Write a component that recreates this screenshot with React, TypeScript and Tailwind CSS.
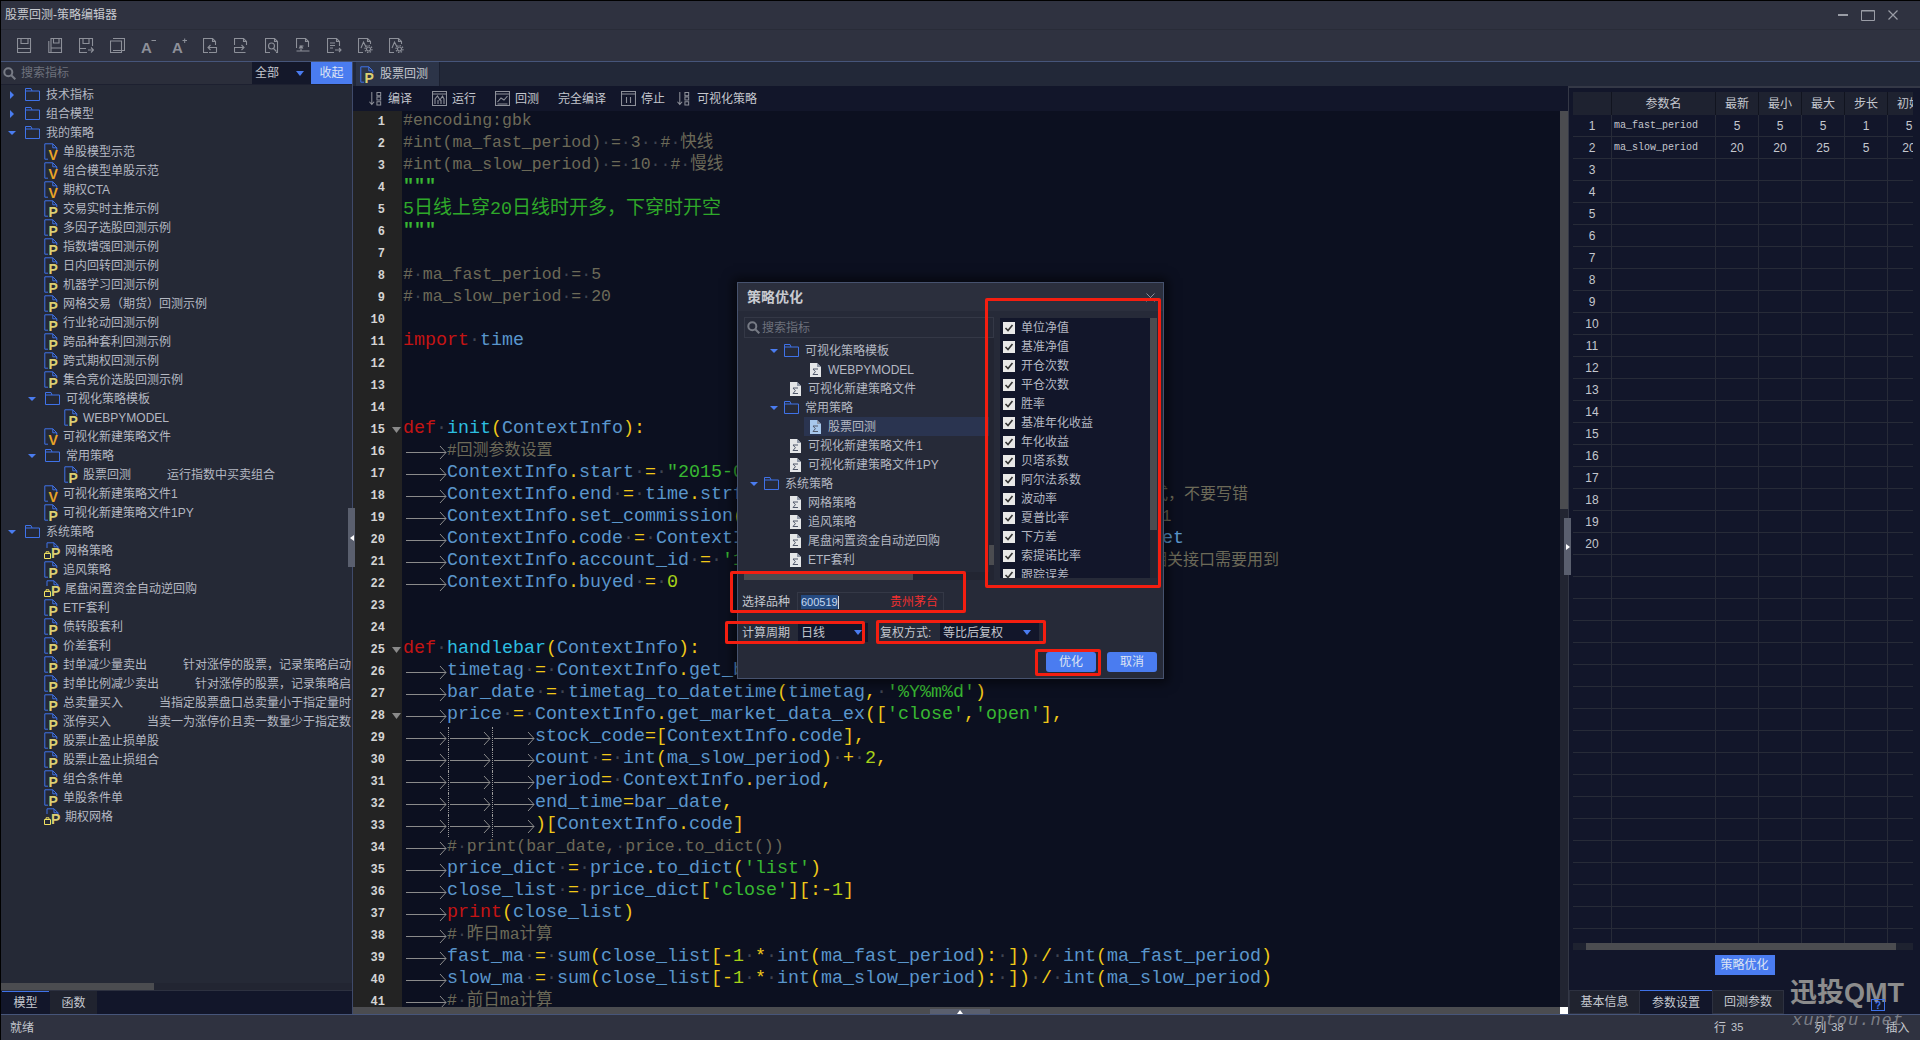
import React from "react";

const BLUE = "#3f72e8";

function Arrow({ open }: { open: boolean }) {
  return (
    <svg width="8" height="8" viewBox="0 0 8 8" className="shrink-0">
      {open ? <path d="M0 2h8L4 6z" fill="#4a7cf0" /> : <path d="M2 0l4 4-4 4z" fill="#4a7cf0" />}
    </svg>
  );
}

function Folder() {
  return (
    <svg width="15" height="13" viewBox="0 0 15 13" fill="none" stroke={BLUE} className="shrink-0">
      <path d="M.5.5h5.5l1 2.5h7.5v9.5H.5zM.5 3H7" />
    </svg>
  );
}

function FileIcon({ k }: { k: string }) {
  if (k === "L") {
    return (
      <svg width="16" height="17" viewBox="0 0 16 17" fill="none" className="shrink-0 overflow-visible">
        <path d="M3 6V.8h7l4 4V7M10 .8v4h4" stroke={BLUE} />
        <text x="7" y="15.5" fontSize="14" fontWeight="700" fill="#dccf72" fontFamily="Liberation Sans">P</text>
        <path d="M.5 11.5h6v5h-6zM2 11.5V9.8h3v1.7" stroke="#f0e060" />
      </svg>
    );
  }
  const v = k === "V";
  return (
    <svg width="14" height="17" viewBox="0 0 14 17" fill="none" className="shrink-0 overflow-visible">
      <path d="M4 16.2H.8V.8h8l4 4V7M8.8.8v4h4" stroke={BLUE} />
      <text x="4.5" y="16.5" fontSize="14" fontWeight="700" fill={v ? "#e8a428" : "#dccf72"} fontFamily="Liberation Sans">{v ? "V" : "P"}</text>
    </svg>
  );
}

function SumIcon({ active }: { active?: boolean }) {
  return (
    <svg width="11" height="14" viewBox="0 0 11 14" className="shrink-0">
      <path d="M0 0h7l4 4v10H0z" fill={active ? "#a8c8ec" : "#e4e6e8"} />
      <path d="M7 0v4h4" fill="#8f98a8" />
      <path d="M3 6h5M3 6l2.400 2.700L3 11.500h5" fill="none" stroke="#50586a" />
    </svg>
  );
}

type T = [string, string, string?];
const tree: T[] = [
  ["F0c", "技术指标"], ["F0c", "组合模型"], ["F0", "我的策略"],
  ["V", "单股模型示范"], ["V", "组合模型单股示范"], ["V", "期权CTA"],
  ["P", "交易实时主推示例"], ["P", "多因子选股回测示例"], ["P", "指数增强回测示例"], ["P", "日内回转回测示例"], ["P", "机器学习回测示例"],
  ["P", "网格交易（期货）回测示例"], ["P", "行业轮动回测示例"], ["P", "跨品种套利回测示例"], ["P", "跨式期权回测示例"], ["P", "集合竞价选股回测示例"],
  ["F1", "可视化策略模板"], ["P2", "WEBPYMODEL"], ["V", "可视化新建策略文件"], ["F1", "常用策略"],
  ["P2", "股票回测", "运行指数中买卖组合"], ["V", "可视化新建策略文件1"], ["P", "可视化新建策略文件1PY"],
  ["F0", "系统策略"], ["L", "网格策略"], ["P", "追风策略"], ["L", "尾盘闲置资金自动逆回购"], ["P", "ETF套利"], ["P", "债转股套利"], ["P", "价差套利"],
  ["P", "封单减少量卖出", "针对涨停的股票，记录策略启动"], ["P", "封单比例减少卖出", "针对涨停的股票，记录策略启"],
  ["P", "总卖量买入", "当指定股票盘口总卖量小于指定量时"], ["P", "涨停买入", "当卖一为涨停价且卖一数量少于指定数"],
  ["P", "股票止盈止损单股"], ["P", "股票止盈止损组合"], ["P", "组合条件单"], ["P", "单股条件单"], ["L", "期权网格"],
];

function TreeRow({ t }: { t: T }) {
  const [k, label, desc] = t;
  let head: React.ReactNode;
  if (k === "F0" || k === "F0c") {
    head = <div className="flex items-center pl-[8px]"><Arrow open={k === "F0"} /><div className="w-[9px]" /><Folder /><div className="w-[6px]" /></div>;
  } else if (k === "F1") {
    head = <div className="flex items-center pl-[28px]"><Arrow open /><div className="w-[9px]" /><Folder /><div className="w-[6px]" /></div>;
  } else if (k === "P2") {
    head = <div className="flex items-center pl-[64px] pr-[5px]"><FileIcon k="P" /></div>;
  } else {
    head = <div className="flex items-center pl-[44px] pr-[5px]"><FileIcon k={k} /></div>;
  }
  return (
    <div className="flex items-center h-[19px] whitespace-nowrap overflow-hidden text-[12px] text-[#b4b8c2]">
      {head}
      <span>{label}</span>
      {desc && <span className="ml-9">{desc}</span>}
    </div>
  );
}

type D = [string, string];
const dlgTree: D[] = [
  ["F1", "可视化策略模板"], ["S2", "WEBPYMODEL"], ["S1", "可视化新建策略文件"], ["F1", "常用策略"], ["SEL", "股票回测"],
  ["S1", "可视化新建策略文件1"], ["S1", "可视化新建策略文件1PY"], ["F0", "系统策略"], ["S1", "网格策略"], ["S1", "追风策略"],
  ["S1", "尾盘闲置资金自动逆回购"], ["S1", "ETF套利"],
];

function DlgRow({ d }: { d: D }) {
  const [k, label] = d;
  if (k === "F1" || k === "F0") {
    return (
      <div className={k === "F1" ? "flex items-center h-[19px] pl-[26px] text-[12px] text-[#b4b8c2] whitespace-nowrap" : "flex items-center h-[19px] pl-[6px] text-[12px] text-[#b4b8c2] whitespace-nowrap"}>
        <Arrow open /><div className="w-[6px]" /><Folder /><div className="w-[6px]" />
        <span>{label}</span>
      </div>
    );
  }
  if (k === "S1") {
    return <div className="flex items-center h-[19px] pl-[46px] gap-[7px] text-[12px] text-[#b4b8c2] whitespace-nowrap"><SumIcon /><span>{label}</span></div>;
  }
  if (k === "S2") {
    return <div className="flex items-center h-[19px] pl-[66px] gap-[7px] text-[12px] text-[#b4b8c2] whitespace-nowrap"><SumIcon /><span>{label}</span></div>;
  }
  return (
    <div className="flex h-[19px] pl-[60px]">
      <div className="flex flex-1 items-center pl-[6px] gap-[7px] text-[12px] text-[#b4b8c2] whitespace-nowrap bg-[#2a3450]"><SumIcon active /><span>{label}</span></div>
    </div>
  );
}

/* ----- code ----- */
function Dot() {
  return <span className="text-[#3e4350]">·</span>;
}

function tokens(s: string) {
  const re = /("[^"]*"|'[^']*'|\b(?:def|import|print)\b|\b(?:init|handlebar)\b|\b\d+\b|[A-Za-z_][A-Za-z_0-9]*| |[^\sA-Za-z_0-9"'])/g;
  const out: React.ReactNode[] = [];
  let m: RegExpExecArray | null;
  let i = 0;
  while ((m = re.exec(s))) {
    const t = m[0];
    const key = i++;
    if (t === " ") out.push(<Dot key={key} />);
    else if (/^["']/.test(t)) out.push(<span key={key} className="text-[#38b832]">{t}</span>);
    else if (/^(def|import|print)$/.test(t)) out.push(<span key={key} className="text-[#c41414]">{t}</span>);
    else if (/^(init|handlebar)$/.test(t)) out.push(<span key={key} className="text-[#2cbfe0]">{t}</span>);
    else if (/^\d/.test(t)) out.push(<span key={key} className="text-[#a6d018]">{t}</span>);
    else if (/^[A-Za-z_]/.test(t)) out.push(<span key={key} className="text-[#5a96cc]">{t}</span>);
    else out.push(<span key={key} className="text-[#f0c818]">{t}</span>);
  }
  return out;
}

function Cm({ s }: { s: string }) {
  const parts = s.split(/( )/);
  return (
    <span className="text-[16.5px] text-[#6c6a58]">
      {parts.map((p, i) => (p === " " ? <Dot key={i} /> : <span key={i}>{p}</span>))}
    </span>
  );
}

function Tab({ guide }: { guide?: boolean }) {
  return (
    <span className="relative inline-block w-[44px] h-[20px] align-top shrink-0">
      <svg width="44" height="22" viewBox="0 0 44 22" fill="none" stroke="#8b8b8b" className="block">
        <path d="M3 11.500h40M37 5l6 6.500-6 6.500" />
      </svg>
      {guide && <span className="absolute left-[1px] top-0 h-[22px] border-l border-dotted border-[#9a9a9a]" />}
    </span>
  );
}

function Tabs({ n, guide }: { n: number; guide?: boolean }) {
  return (
    <>
      <Tab />
      {n > 1 && <Tab guide={guide} />}
      {n > 2 && <Tab guide={guide} />}
    </>
  );
}

const C = ({ s }: { s: string }) => <>{tokens(s)}</>;
const Sp = ({ cls }: { cls: string }) => <span className={cls} />;

const lines: { n: number; fold?: boolean; c: React.ReactNode }[] = [
  { n: 1, c: <Cm s="#encoding:gbk" /> },
  { n: 2, c: <Cm s="#int(ma_fast_period) = 3  # 快线" /> },
  { n: 3, c: <Cm s="#int(ma_slow_period) = 10  # 慢线" /> },
  { n: 4, c: <span className="text-[#38b832] font-bold">"""</span> },
  { n: 5, c: <span className="text-[#2fa82a]">5<span className="text-[19px]">日线上穿</span>20<span className="text-[19px]">日线时开多，下穿时开空</span></span> },
  { n: 6, c: <span className="text-[#38b832] font-bold">"""</span> },
  { n: 7, c: null },
  { n: 8, c: <Cm s="# ma_fast_period = 5" /> },
  { n: 9, c: <Cm s="# ma_slow_period = 20" /> },
  { n: 10, c: null },
  { n: 11, c: <C s="import time" /> },
  { n: 12, c: null },
  { n: 13, c: null },
  { n: 14, c: null },
  { n: 15, fold: true, c: <C s="def init(ContextInfo):" /> },
  { n: 16, c: <><Tabs n={1} /><span className="text-[16px] text-[#6c6a58]">#回测参数设置</span></> },
  { n: 17, c: <><Tabs n={1} /><C s={'ContextInfo.start = "2015-01-05"'} /></> },
  { n: 18, c: <><Tabs n={1} /><C s="ContextInfo.end = time.strftime(" /><Sp cls="inline-block w-[353px]" /><span className="text-[16px] text-[#6c6a58]">式，不要写错</span></> },
  { n: 19, c: <><Tabs n={1} /><C s="ContextInfo.set_commission(" /><Sp cls="inline-block w-[368px]" /><Cm s="0.0001" /></> },
  { n: 20, c: <><Tabs n={1} /><C s="ContextInfo.code = ContextInfo.stockcode + '.' + ContextInfo.market" /></> },
  { n: 21, c: <><Tabs n={1} /><C s="ContextInfo.account_id = '100000'" /><Sp cls="inline-block w-[341px]" /><span className="text-[16px] text-[#6c6a58]">相关接口需要用到</span></> },
  { n: 22, c: <><Tabs n={1} /><C s="ContextInfo.buyed = 0" /></> },
  { n: 23, c: null },
  { n: 24, c: null },
  { n: 25, fold: true, c: <C s="def handlebar(ContextInfo):" /> },
  { n: 26, c: <><Tabs n={1} /><C s="timetag = ContextInfo.get_bar_timetag(ContextInfo.barpos)" /></> },
  { n: 27, c: <><Tabs n={1} /><C s="bar_date = timetag_to_datetime(timetag, '%Y%m%d')" /></> },
  { n: 28, fold: true, c: <><Tabs n={1} /><C s="price = ContextInfo.get_market_data_ex(['close','open']," /></> },
  { n: 29, c: <><Tabs n={3} guide /><C s="stock_code=[ContextInfo.code]," /></> },
  { n: 30, c: <><Tabs n={3} guide /><C s="count = int(ma_slow_period) + 2," /></> },
  { n: 31, c: <><Tabs n={3} guide /><C s="period= ContextInfo.period," /></> },
  { n: 32, c: <><Tabs n={3} guide /><C s="end_time=bar_date," /></> },
  { n: 33, c: <><Tabs n={3} guide /><C s=")[ContextInfo.code]" /></> },
  { n: 34, c: <><Tabs n={1} /><Cm s="# print(bar_date, price.to_dict())" /></> },
  { n: 35, c: <><Tabs n={1} /><C s="price_dict = price.to_dict('list')" /></> },
  { n: 36, c: <><Tabs n={1} /><C s="close_list = price_dict['close'][:-1]" /></> },
  { n: 37, c: <><Tabs n={1} /><C s="print(close_list)" /></> },
  { n: 38, c: <><Tabs n={1} /><Cm s="# 昨日ma计算" /></> },
  { n: 39, c: <><Tabs n={1} /><C s="fast_ma = sum(close_list[-1 * int(ma_fast_period): ]) / int(ma_fast_period)" /></> },
  { n: 40, c: <><Tabs n={1} /><C s="slow_ma = sum(close_list[-1 * int(ma_slow_period): ]) / int(ma_slow_period)" /></> },
  { n: 41, c: <><Tabs n={1} /><Cm s="# 前日ma计算" /></> },
];

/* ----- toolbar icons ----- */
const I = ({ children, w = 15 }: { children: React.ReactNode; w?: number }) => (
  <svg width={w} height="15" viewBox="0 0 15 15" fill="none" stroke="#8d9099" strokeWidth="1.1" className="shrink-0">{children}</svg>
);

const toolbar: React.ReactNode[] = [
  <I key="1"><path d="M.5.5h13v14H.5zM4 .5v5h7v-5M.5 10.500h13" /></I>,
  <I key="2"><path d="M3 .5h10.500v14H3zM.8 3v11.500h9M5.500.5v4.500h5.500V.5M3 10h10" /></I>,
  <I key="3"><path d="M8 14.500H.5V.5h13V8M4 .5v5h6v-5M.5 10.500H7M9 12h5.500M12 9.500l2.500 2.500-2.500 2.500" /></I>,
  <I key="4"><path d="M3 .5h11.500v12H3M.5 3v11.500h11V3zM.5 3H3" /></I>,
  <svg key="5" width="15" height="15" viewBox="0 0 15 15" className="shrink-0 overflow-visible"><text x="0" y="15" fontSize="15" fontWeight="700" fill="#8d9099" fontFamily="Liberation Sans">A</text><path d="M10.500 2.500h4.500" stroke="#8d9099" /></svg>,
  <svg key="6" width="15" height="15" viewBox="0 0 15 15" className="shrink-0 overflow-visible"><text x="0" y="15" fontSize="15" fontWeight="700" fill="#8d9099" fontFamily="Liberation Sans">A</text><path d="M10.500 2.500h4.500M12.700.5v4.500" stroke="#8d9099" /></svg>,
  <I key="7"><path d="M5 14.500H.5V.5h9l3 3V7M9.500.5v3h3M13.500 14.500V9.500h-8M7.500 7l-2.500 2.500 2.500 2.500M13.500 14.500H6" /></I>,
  <I key="8"><path d="M.5 7V.5h9l3 3V7M9.500.5v3h3M.5 14.500V9.500h9M7.500 7l2.500 2.500-2.500 2.500M.5 14.500h11" /></I>,
  <I key="9"><path d="M5 14.500H.5V.5h9l3 3v11H11M9.500.5v3h3" /><circle cx="6.500" cy="8" r="3" /><path d="M8.500 10.500l3 3" /></I>,
  <I key="10"><path d="M.5 10V.5h9l3 3V9M9.500.5v3h3M.5 13h13M5 13V8M7.500 8H3.500M3 10.500l2-2.500 2 2.500" /></I>,
  <I key="11"><path d="M7 14.500H.5V.5h9l3 3V8M9.500.5v3h3M3 5h5M3 7.500h5M3 10h3M8 12h6M12 10l2 2-2 2" /></I>,
  <I key="12"><path d="M5 14.500H.5V.5h9l3 3V6M9.500.5v3h3M3 10l2.500-6L8 9" /><circle cx="10.500" cy="11" r="2" /><circle cx="10.500" cy="11" r="3.500" strokeDasharray="1.500 1.200" /></I>,
  <I key="13"><path d="M5 14.500H.5V.5h9l3 3V6M9.500.5v3h3M3 10l2.500-6L8 9" /><circle cx="10.500" cy="11" r="2" /><circle cx="10.500" cy="11" r="3.500" strokeDasharray="1.500 1.200" /></I>,
];

const SortIcon = () => (
  <I w={14}><path d="M3 .5v13M.5 11l2.500 3 2.500-3M8.500 1h4v3.500h-4zM8.500 6h4v3h-4zM8.500 11h4v3.500h-4z" /></I>
);
const ChartBox = ({ d }: { d: string }) => (
  <I><path d="M.5.5h14v14H.5zM.5 3h14" /><path d={d} /></I>
);

const cols = ["w-[39px]", "w-[104px]", "w-[43px]", "w-[43px]", "w-[43px]", "w-[43px]", "w-[43px]"];
const rowsData: Record<number, string[]> = {
  1: ["ma_fast_period", "5", "5", "5", "1", "5"],
  2: ["ma_slow_period", "20", "20", "25", "5", "20"],
};
const checks = ["单位净值", "基准净值", "开仓次数", "平仓次数", "胜率", "基准年化收益", "年化收益", "贝塔系数", "阿尔法系数", "波动率", "夏普比率", "下方差", "索提诺比率", "跟踪误差"];

const Caret = () => (
  <svg width="8" height="5" viewBox="0 0 8 5" className="shrink-0"><path d="M0 0h8L4 5z" fill="#4a7cf0" /></svg>
);
const SearchIcon = () => (
  <svg width="13" height="13" viewBox="0 0 13 13" fill="none" stroke="#777b85" strokeWidth="2" className="shrink-0">
    <circle cx="5.300" cy="5.300" r="4" /><path d="M8.300 8.300l4 4" />
  </svg>
);

export default function App() {
  return (
    <div className="relative w-[1920px] h-[1040px] overflow-hidden flex flex-col bg-[#2f3240] text-[12px] text-[#c4c7ce] font-['Liberation_Sans','Noto_Sans_CJK_SC',sans-serif]">
      {/* title */}
      <div className="h-[30px] shrink-0 flex items-center justify-between border-t border-b border-t-black border-b-[#292c38] pl-[5px] pr-[22px] bg-[#2f3240]">
        <span className="text-[12px] text-[#c8cad0]">股票回测-策略编辑器</span>
        <div className="flex items-center gap-[13px]">
          <svg width="10" height="10" viewBox="0 0 10 10"><path d="M0 5h10" stroke="#9a9da6" strokeWidth="2" /></svg>
          <svg width="14" height="11" viewBox="0 0 14 11" fill="none" stroke="#9a9da6"><path d="M.5.5h13v10H.5z" /><path d="M.5 1h13" /></svg>
          <svg width="10" height="10" viewBox="0 0 10 10" fill="none" stroke="#9a9da6" strokeWidth="1.200"><path d="M.5.5l9 9M9.500.5l-9 9" /></svg>
        </div>
      </div>
      {/* toolbar */}
      <div className="h-[32px] shrink-0 flex items-center pl-[17px] gap-[16px] bg-[#2f3240] border-b border-[#46557a]">
        {toolbar}
      </div>
      {/* main */}
      <div className="flex-1 flex min-h-0">
        {/* left */}
        <div className="w-[352px] shrink-0 flex flex-col bg-[#252936]">
          <div className="h-[23px] shrink-0 flex bg-[#2b2e3b] border-b border-[#1d2030]">
            <div className="w-[250px] flex items-center pl-[3px] gap-[5px] text-[#6d717c]">
              <SearchIcon /><span>搜索指标</span>
            </div>
            <div className="w-[59px] ml-[2px] flex items-center justify-between pl-[3px] pr-[7px] bg-[#14182a] text-[#c4c7ce]">
              <span>全部</span><Caret />
            </div>
            <div className="w-[41px] flex items-center justify-center bg-[#4a7cf0] text-[#dde4f4]">收起</div>
          </div>
          <div className="flex-1 min-h-0 overflow-hidden pr-[1px]">
            {tree.map((t, i) => <TreeRow key={i} t={t} />)}
          </div>
          <div className="h-[7px] shrink-0 bg-[#222532]"><div className="w-[154px] h-full bg-[#4b4c50]" /></div>
          <div className="h-[24px] shrink-0 flex bg-[#12162a] border-t border-[#2d3140] pl-[2px] gap-[1px] text-[#c4c7ce]">
            <div className="w-[47px] flex items-center justify-center bg-[#12162a] border-t border-[#3f72e8]">模型</div>
            <div className="w-[47px] flex items-center justify-center bg-[#20232f]">函数</div>
          </div>
        </div>
        {/* right of left */}
        <div className="flex-1 min-w-0 flex flex-col">
          <div className="h-[24px] shrink-0 flex bg-[#222838] pl-[3px] border-l border-[#3f4a6a]">
            <div className="w-[84px] flex items-center pl-[4px] gap-[6px] bg-[#2c3448] border-r border-[#1b2030] text-[#c4c7ce]">
              <FileIcon k="P" /><span>股票回测</span>
            </div>
          </div>
          <div className="flex-1 min-h-0 flex">
            {/* editor */}
            <div className="w-[1216px] shrink-0 flex flex-col border-l border-[#3f4a6a] bg-[#0c1020]">
              <div className="h-[25px] shrink-0 flex items-center pl-[16px] bg-[#12162a] text-[#c4c7ce]">
                <SortIcon /><span className="ml-[5px]">编译</span>
                <span className="ml-[20px]"><ChartBox d="M3 13V8l2.500-3L8 9l2.500-4L12 8v5M6 13V9M9 13V9" /></span><span className="ml-[5px]">运行</span>
                <span className="ml-[19px]"><ChartBox d="M2.500 11l3.500-4 3 2 3.500-4M2.500 13h10" /></span><span className="ml-[5px]">回测</span>
                <span className="ml-[19px]">完全编译</span>
                <span className="ml-[15px]"><ChartBox d="M5.500 6v6M9.500 6v6" /></span><span className="ml-[5px]">停止</span>
                <span className="ml-[12px]"><SortIcon /></span><span className="ml-[6px]">可视化策略</span>
              </div>
              <div className="flex-1 min-h-0 flex">
                <div className="w-[1207px] shrink-0 overflow-hidden font-['Liberation_Mono','Noto_Sans_CJK_SC',monospace] text-[18.33px]">
                  {lines.map((l) => (
                    <div key={l.n} className="flex h-[22px] leading-[22px] whitespace-pre">
                      <div className="relative w-[49px] shrink-0 bg-[#232323] pr-[17px] text-right text-[12px] font-bold text-[#d4d4d4]">
                        {l.n}
                        {l.fold && <svg width="9" height="6" viewBox="0 0 9 6" className="absolute left-[39px] top-[8px]"><path d="M0 0h9L4.500 6z" fill="#8a8a8a" /></svg>}
                      </div>
                      <div className="pl-[1px] flex items-start leading-[20px]">
                        <span>{l.c}</span>
                      </div>
                    </div>
                  ))}
                </div>
                <div className="w-[8px] shrink-0 bg-[#222532]"><div className="h-[398px] bg-[#4b4c50]" /></div>
              </div>
              <div className="h-[7px] shrink-0 flex bg-[#4b4c50]">
                <div className="flex-1" />
                <div className="w-[8px] bg-white" />
              </div>
            </div>
            {/* right panel */}
            <div className="flex-1 min-w-0 flex flex-col bg-[#12162a] border-t-[2px] border-l border-[#343846]">
              <div className="mt-[4px] ml-[4px] w-[340px] h-[851px] shrink-0 overflow-hidden">
                <div className="flex w-[400px] h-[23px] bg-[#1e2230]">
                  {["", "参数名", "最新", "最小", "最大", "步长", "初始"].map((h, i) => (
                    <div key={i} className={cols[i] + " shrink-0 flex items-center justify-center border-r border-[#11141f] text-[#c4c7ce]"}>{h}</div>
                  ))}
                </div>
                {Array.from({ length: 38 }, (_, i) => i + 1).map((r) => {
                  const d = rowsData[r] || ["", "", "", "", "", ""];
                  return (
                    <div key={r} className="flex w-[400px] h-[22px] border-b border-[#272b38]">
                      <div className={cols[0] + " shrink-0 flex items-center justify-center border-r border-[#272b38] text-[#c4c7ce]"}>{r <= 20 ? r : ""}</div>
                      {d.map((v, i) => (
                        <div key={i} className={i === 0
                          ? cols[1] + " shrink-0 flex items-center pl-[2px] border-r border-[#272b38] font-['Liberation_Mono',monospace] text-[10px] text-[#c4c7ce]"
                          : cols[i + 1] + " shrink-0 flex items-center justify-center border-r border-[#272b38] text-[#c4c7ce]"}>{v}</div>
                      ))}
                    </div>
                  );
                })}
              </div>
              <div className="ml-[4px] w-[340px] h-[7px] shrink-0 bg-[#1e2230] pl-[13px]"><div className="w-[310px] h-full bg-[#4b4c50]" /></div>
              <div className="mt-[5px] h-[20px] shrink-0 flex justify-center">
                <div className="w-[60px] flex items-center justify-center bg-[#4a7cf0] text-[#dde4f4]">策略优化</div>
              </div>
              <div className="flex-1" />
              <div className="h-[24px] shrink-0 flex text-[#c4c7ce]">
                <div className="w-[71px] flex items-center justify-center bg-[#20232f] border border-[#2d3140]">基本信息</div>
                <div className="w-[72px] flex items-center justify-center bg-[#12162a] border-t border-[#3f72e8]">参数设置</div>
                <div className="w-[72px] flex items-center justify-center bg-[#20232f] border border-[#2d3140]">回测参数</div>
              </div>
            </div>
          </div>
        </div>
      </div>
      {/* status */}
      <div className="h-[26px] shrink-0 flex items-center pl-[10px] bg-[#2f3240] border-t border-[#46557a] text-[#c4c7ce] whitespace-nowrap">
        <span className="shrink-0">就绪</span>
        <span className="ml-[1680px] shrink-0">行</span><span className="ml-[5px] text-[11px] shrink-0">35</span>
        <span className="ml-[71px] shrink-0">列</span><span className="ml-[5px] text-[11px] shrink-0">38</span>
        <span className="ml-[42px] shrink-0">插入</span>
      </div>

      {/* overlays: window edge, splitter handles */}
      <div className="absolute left-0 top-0 bottom-0 w-px bg-black" />
      <div className="absolute left-[348px] top-[508px] w-[7px] h-[59px] bg-[#5a5f6e] flex items-center justify-center">
        <svg width="4" height="6" viewBox="0 0 4 6"><path d="M4 0v6L0 3z" fill="#fff" /></svg>
      </div>
      <div className="absolute left-[1564px] top-[518px] w-[7px] h-[57px] bg-[#5a5f6e] flex items-center justify-center">
        <svg width="4" height="6" viewBox="0 0 4 6"><path d="M0 0v6l4-3z" fill="#fff" /></svg>
      </div>
      <div className="absolute left-[930px] top-[1009px] w-[60px] h-[5px] bg-[#5a5f6e] flex items-center justify-center">
        <svg width="6" height="4" viewBox="0 0 6 4"><path d="M0 4h6L3 0z" fill="#fff" /></svg>
      </div>

      {/* dialog */}
      <div className="absolute left-[737px] top-[282px] w-[427px] h-[397px] flex flex-col bg-[#262a38] border border-[#46526e] shadow-[0_0_10px_4px_rgba(0,0,0,0.55)]">
        <div className="h-[28px] shrink-0 flex items-center justify-between pl-[9px] pr-[8px] bg-[#2b2f3d]">
          <span className="text-[14px] font-bold text-[#c8cad0]">策略优化</span>
          <svg width="9" height="9" viewBox="0 0 9 9" fill="none" stroke="#8b8e98"><path d="M.5.5l8 8M8.500.5l-8 8" /></svg>
        </div>
        <div className="mt-[6px] h-[263px] shrink-0 flex pl-[6px]">
          <div className="w-[250px] shrink-0 flex flex-col">
            <div className="h-[21px] shrink-0 flex items-center pl-[2px] gap-[2px] border border-[#343846] text-[#6d717c]">
              <SearchIcon /><span>搜索指标</span>
            </div>
            <div className="relative flex-1 min-h-0 overflow-hidden pt-[3px]">
              {dlgTree.map((d, i) => <DlgRow key={i} d={d} />)}
              <div className="absolute right-0 top-0 bottom-0 w-[5px] bg-[#222532]"><div className="mt-[207px] h-[20px] bg-[#4b4c50]" /></div>
            </div>
            <div className="h-[8px] shrink-0 bg-[#222532]"><div className="w-[169px] h-full bg-[#4b4c50]" /></div>
          </div>
          <div className="ml-[6px] mt-[1px] w-[157px] h-[260px] shrink-0 flex bg-[#12162a] overflow-hidden">
            <div className="flex-1 pl-[3px]">
              {checks.map((c) => (
                <div key={c} className="flex items-center h-[19px] gap-[6px] text-[12px] text-[#b4b8c2]">
                  <span className="w-[12px] h-[12px] shrink-0 bg-[#e8e8e8] flex items-center justify-center">
                    <svg width="10" height="10" viewBox="0 0 10 10" fill="none" stroke="#333" strokeWidth="1.600"><path d="M1.500 5l2.500 2.500 4.500-5.500" /></svg>
                  </span>
                  <span className="whitespace-nowrap">{c}</span>
                </div>
              ))}
            </div>
            <div className="w-[7px] shrink-0 bg-[#222532]"><div className="h-[212px] bg-[#4b4c50]" /></div>
          </div>
        </div>
        <div className="mt-[12px] h-[20px] shrink-0 flex items-center pl-[4px]">
          <span className="w-[55px] shrink-0">选择品种</span>
          <div className="w-[147px] h-full flex items-center justify-between pl-[3px] pr-[5px] bg-[#262a38] border border-[#343846]">
            <span className="flex items-center">
              <span className="bg-[#254a80] text-[#c4d8f0] text-[11px] leading-[14px]">600519</span>
              <span className="w-px h-[13px] bg-[#d8d8d8]" />
            </span>
            <span className="text-[#f03030]">贵州茅台</span>
          </div>
        </div>
        <div className="mt-[11px] h-[19px] shrink-0 flex items-center pl-[4px]">
          <span className="w-[56px] shrink-0">计算周期</span>
          <div className="w-[70px] h-full flex items-center justify-between pl-[3px] pr-[6px] bg-[#12162a]"><span>日线</span><Caret /></div>
          <span className="ml-[12px] w-[60px] shrink-0">复权方式:</span>
          <div className="w-[99px] h-full flex items-center justify-between pl-[3px] pr-[8px] bg-[#12162a]"><span>等比后复权</span><Caret /></div>
        </div>
        <div className="mt-[10px] h-[20px] shrink-0 flex justify-end pr-[6px] gap-[11px] text-[#dde4f4]">
          <div className="w-[50px] flex items-center justify-center rounded-[3px] bg-[#4a7cf0]">优化</div>
          <div className="w-[50px] flex items-center justify-center rounded-[3px] bg-[#4a7cf0]">取消</div>
        </div>
      </div>

      {/* red annotations */}
      <div className="absolute left-[730px] top-[571px] w-[236px] h-[42px] rounded-[2px] border-[3px] border-[#f41e10]" />
      <div className="absolute left-[725px] top-[621px] w-[140px] h-[23px] rounded-[2px] border-[3px] border-[#f41e10]" />
      <div className="absolute left-[876px] top-[620px] w-[170px] h-[24px] rounded-[2px] border-[3px] border-[#f41e10]" />
      <div className="absolute left-[1035px] top-[649px] w-[66px] h-[27px] rounded-[2px] border-[3px] border-[#f41e10]" />
      <div className="absolute left-[985px] top-[298px] w-[176px] h-[290px] rounded-[2px] border-[3px] border-[#f41e10]" />

      {/* watermark */}
      <div className="absolute left-[1790px] top-[977px] text-[27px] leading-[32px] font-bold text-[#8c8c8c] whitespace-nowrap">迅投QMT</div>
      <div className="absolute left-[1792px] top-[1010px] text-[17px] leading-[22px] italic tracking-[1px] text-[#7c7e86] whitespace-nowrap font-['Liberation_Mono',monospace]">xuntou.net</div>
      <div className="absolute left-[1871px] top-[999px] w-[14px] h-[12px] border border-[#3f72e8] flex items-center justify-center text-[10px] font-bold text-[#3f72e8]">?</div>
    </div>
  );
}
